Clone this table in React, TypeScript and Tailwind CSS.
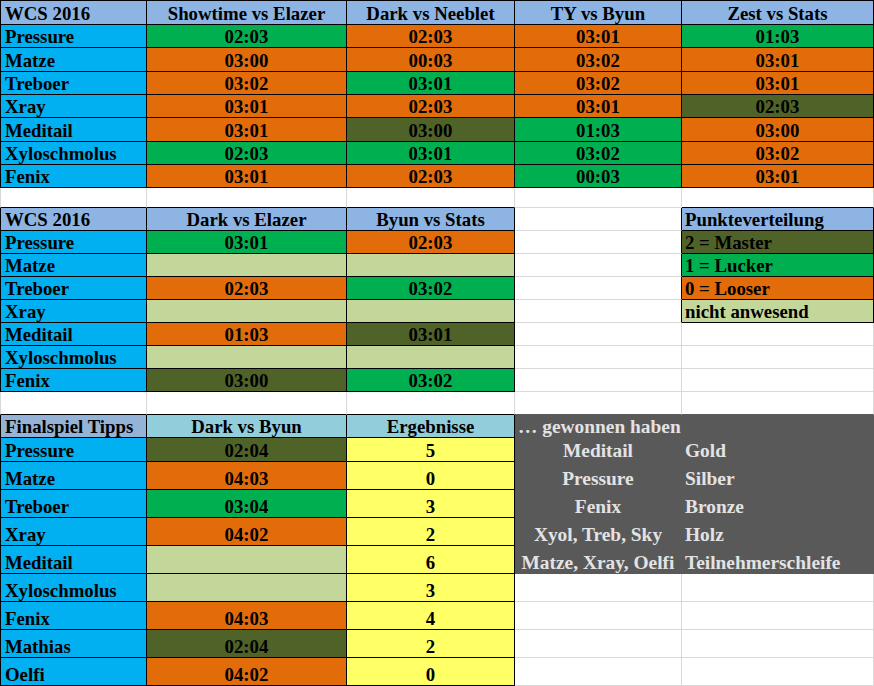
import React from "react";

type B = "k" | "g" | "p";
type Cell = {
  t?: string;
  bg: string;
  a?: "l" | "c";
  r: B;
  b: B;
  tc?: string;
};

const BG: Record<string, string> = {
  h: "bg-[#8db4e2]",
  n: "bg-[#00b0f0]",
  g: "bg-[#00b050]",
  o: "bg-[#e26b0a]",
  d: "bg-[#4f6228]",
  l: "bg-[#c4d79b]",
  y: "bg-[#ffff66]",
  a: "bg-[#92cddc]",
  f: "bg-[#95b3d7]",
  p: "bg-[#595959]",
  w: "bg-white",
};

const RB: Record<B, string> = {
  k: "border-r-black",
  g: "border-r-[#d9d9d9]",
  p: "border-r-[#595959]",
};
const BB: Record<B, string> = {
  k: "border-b-black",
  g: "border-b-[#d9d9d9]",
  p: "border-b-[#595959]",
};

const W = ["w-[147px]", "w-[200px]", "w-[168px]", "w-[167px]", "w-[192px]"];

type Row = { h: string; top?: boolean; left: B; cells: Cell[] };

const PT = "text-[#e3e3e3] text-[19.4px]";

const k = (t: string | undefined, bg: string, a: "l" | "c" = "c"): Cell => ({ t, bg, a, r: "k", b: "k" });

const t1Data: [string, [string, string][]][] = [
  ["Pressure", [["02:03", "g"], ["02:03", "o"], ["03:01", "o"], ["01:03", "g"]]],
  ["Matze", [["03:00", "o"], ["00:03", "o"], ["03:02", "o"], ["03:01", "o"]]],
  ["Treboer", [["03:02", "o"], ["03:01", "g"], ["03:02", "o"], ["03:01", "o"]]],
  ["Xray", [["03:01", "o"], ["02:03", "o"], ["03:01", "o"], ["02:03", "d"]]],
  ["Meditail", [["03:01", "o"], ["03:00", "d"], ["01:03", "g"], ["03:00", "o"]]],
  ["Xyloschmolus", [["02:03", "g"], ["03:01", "g"], ["03:02", "g"], ["03:02", "o"]]],
  ["Fenix", [["03:01", "o"], ["02:03", "o"], ["00:03", "g"], ["03:01", "o"]]],
];
const t1H = ["h-[23px]", "h-[24px]", "h-[23px]", "h-[23px]", "h-[24px]", "h-[23px]", "h-[23px]"];

const t2Data: [string, [string, string][], [string, string] | null][] = [
  ["Pressure", [["03:01", "g"], ["02:03", "o"]], ["2 = Master", "d"]],
  ["Matze", [["", "l"], ["", "l"]], ["1 = Lucker", "g"]],
  ["Treboer", [["02:03", "o"], ["03:02", "g"]], ["0 = Looser", "o"]],
  ["Xray", [["", "l"], ["", "l"]], ["nicht anwesend", "l"]],
  ["Meditail", [["01:03", "o"], ["03:01", "d"]], null],
  ["Xyloschmolus", [["", "l"], ["", "l"]], null],
  ["Fenix", [["03:00", "d"], ["03:02", "g"]], null],
];

const t3Data: [string, [string, string], string, [string, string] | null][] = [
  ["Pressure", ["02:04", "d"], "5", ["Meditail", "Gold"]],
  ["Matze", ["04:03", "o"], "0", ["Pressure", "Silber"]],
  ["Treboer", ["03:04", "g"], "3", ["Fenix", "Bronze"]],
  ["Xray", ["04:02", "o"], "2", ["Xyol, Treb, Sky", "Holz"]],
  ["Meditail", ["", "l"], "6", ["Matze, Xray, Oelfi", "Teilnehmerschleife"]],
  ["Xyloschmolus", ["", "l"], "3", null],
  ["Fenix", ["04:03", "o"], "4", null],
  ["Mathias", ["02:04", "d"], "2", null],
  ["Oelfi", ["04:02", "o"], "0", null],
];

const rows: Row[] = [];

rows.push({
  h: "h-[25px]",
  top: true,
  left: "k",
  cells: [
    k("WCS 2016", "h", "l"),
    k("Showtime vs Elazer", "h"),
    k("Dark vs Neeblet", "h"),
    k("TY vs Byun", "h"),
    k("Zest vs Stats", "h"),
  ],
});
t1Data.forEach(([n, cs], i) => {
  rows.push({
    h: t1H[i],
    left: "k",
    cells: [k(n, "n", "l"), ...cs.map(([t, c]) => k(t, c))],
  });
});
rows.push({
  h: "h-[20px]",
  left: "g",
  cells: [
    { bg: "w", r: "g", b: "k" },
    { bg: "w", r: "g", b: "k" },
    { bg: "w", r: "g", b: "k" },
    { bg: "w", r: "g", b: "g" },
    { bg: "w", r: "g", b: "k" },
  ],
});
rows.push({
  h: "h-[23px]",
  left: "k",
  cells: [
    k("WCS 2016", "h", "l"),
    k("Dark vs Elazer", "h"),
    k("Byun vs Stats", "h"),
    { bg: "w", r: "k", b: "g" },
    k("Punkteverteilung", "h", "l"),
  ],
});
t2Data.forEach(([n, cs, leg]) => {
  rows.push({
    h: "h-[23px]",
    left: "k",
    cells: [
      k(n, "n", "l"),
      ...cs.map(([t, c]) => k(t, c)),
      { bg: "w", r: leg ? "k" : "g", b: "g" },
      leg ? k(leg[0], leg[1], "l") : { bg: "w", r: "g", b: "g" },
    ],
  });
});
rows.push({
  h: "h-[23px]",
  left: "g",
  cells: [
    { bg: "w", r: "g", b: "k" },
    { bg: "w", r: "g", b: "k" },
    { bg: "w", r: "g", b: "k" },
    { bg: "w", r: "g", b: "p" },
    { bg: "w", r: "g", b: "p" },
  ],
});
rows.push({
  h: "h-[23px]",
  left: "k",
  cells: [
    k("Finalspiel Tipps", "f", "l"),
    k("Dark vs Byun", "a"),
    k("Ergebnisse", "a"),
    { t: "… gewonnen haben", bg: "p", a: "l", r: "p", b: "p", tc: PT },
    { bg: "p", r: "p", b: "p" },
  ],
});
t3Data.forEach(([n, [t, c], res, win], i) => {
  rows.push({
    h: i === 0 ? "h-[24px]" : "h-[28px]",
    left: "k",
    cells: [
      k(n, "n", "l"),
      k(t, c),
      k(res, "y"),
      win
        ? { t: win[0], bg: "p", a: "c", r: "p", b: "p", tc: PT }
        : { bg: "w", r: "g", b: "g" },
      win
        ? { t: win[1], bg: "p", a: "l", r: "p", b: "p", tc: PT }
        : { bg: "w", r: "g", b: "g" },
    ],
  });
});

export default function App() {
  return (
    <div
      className="w-[874px] h-[686px] overflow-hidden bg-white font-bold text-[18.8px] leading-[21px] text-black"
      style={{ fontFamily: '"Liberation Serif", "Times New Roman", serif' }}
    >
      {rows.map((row, ri) => (
        <div key={ri} className={`flex ${row.h}`}>
          {row.cells.map((c, ci) => {
            const cls = [
              "box-border flex items-end whitespace-nowrap border-r border-b overflow-visible",
              W[ci],
              BG[c.bg],
              RB[c.r],
              BB[c.b],
              row.top ? "border-t border-t-black" : "",
              ci === 0 ? (row.left === "k" ? "border-l border-l-black" : "border-l border-l-[#d9d9d9]") : "",
              c.a === "l" ? (ci === 0 ? "justify-start pl-[4px]" : "justify-start pl-[3px]") : "justify-center",
              c.tc ?? "",
            ].join(" ");
            return (
              <div key={ci} className={cls}>
                {c.t ? <span className="relative z-10">{c.t}</span> : null}
              </div>
            );
          })}
        </div>
      ))}
    </div>
  );
}
